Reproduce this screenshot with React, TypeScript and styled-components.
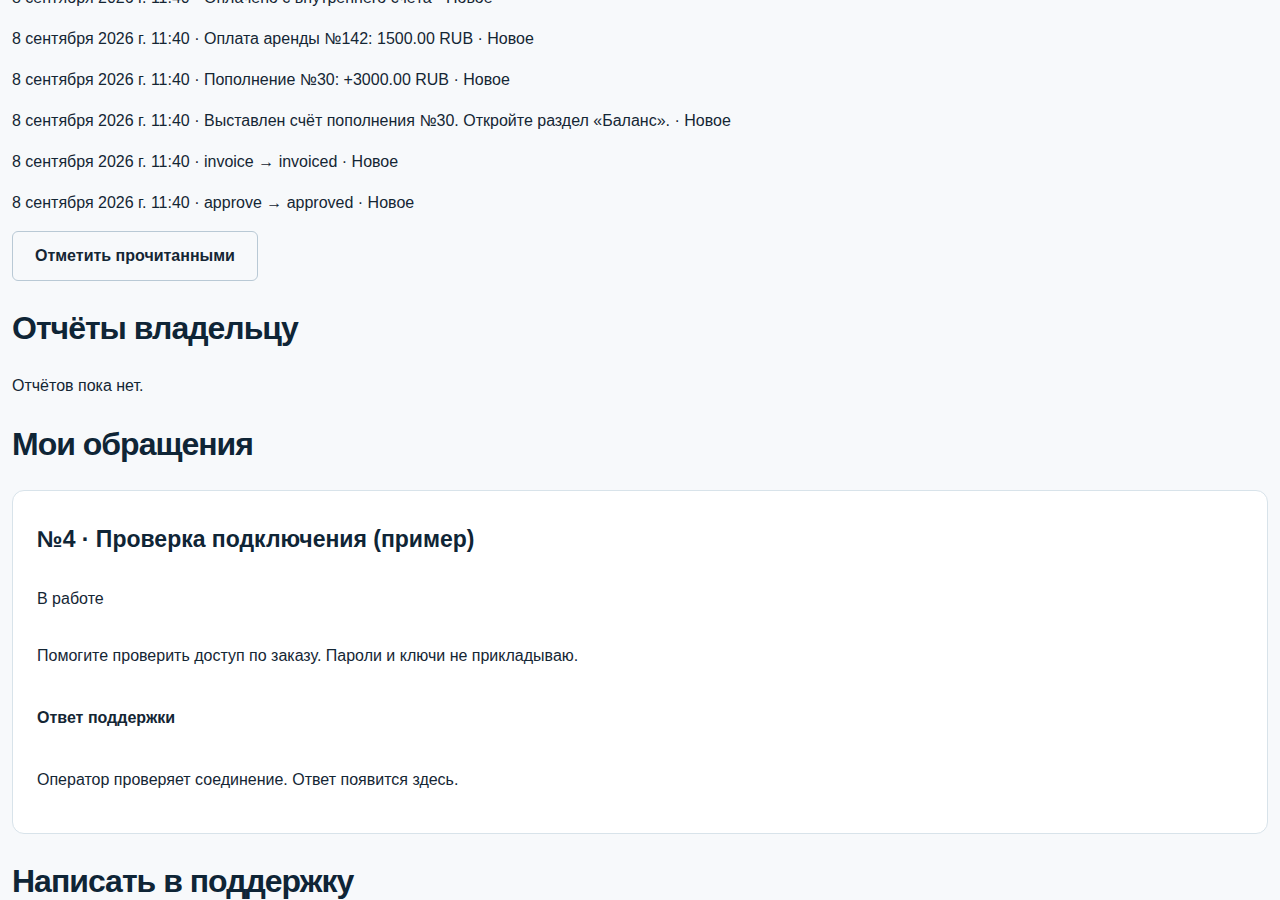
import styled, { createGlobalStyle } from 'styled-components';

interface INotification {
  date: string;
  text: string;
  status: string;
}

const notifications: INotification[] = [
  { date: '8 сентября 2026 г. 11:40', text: 'Оплачено с внутреннего счёта', status: 'Новое' },
  { date: '8 сентября 2026 г. 11:40', text: 'Оплата аренды №142: 1500.00 RUB', status: 'Новое' },
  { date: '8 сентября 2026 г. 11:40', text: 'Пополнение №30: +3000.00 RUB', status: 'Новое' },
  {
    date: '8 сентября 2026 г. 11:40',
    text: 'Выставлен счёт пополнения №30. Откройте раздел «Баланс».',
    status: 'Новое',
  },
  { date: '8 сентября 2026 г. 11:40', text: 'invoice → invoiced', status: 'Новое' },
  { date: '8 сентября 2026 г. 11:40', text: 'approve → approved', status: 'Новое' },
];

const App = () => {
  return (
    <>
      <GlobalStyle />
      <Page>
        <NotificationList>
          {notifications.map((n, i) => (
            <NotificationRow key={i}>
              {n.date} · {n.text} · {n.status}
            </NotificationRow>
          ))}
        </NotificationList>
        <OutlineButton type="button">Отметить прочитанными</OutlineButton>

        <SectionTitle>Отчёты владельцу</SectionTitle>
        <Text>Отчётов пока нет.</Text>

        <SectionTitle>Мои обращения</SectionTitle>
        <TicketCard>
          <TicketTitle>№4 · Проверка подключения (пример)</TicketTitle>
          <TicketLine>В работе</TicketLine>
          <TicketLine>Помогите проверить доступ по заказу. Пароли и ключи не прикладываю.</TicketLine>
          <ReplyLabel>Ответ поддержки</ReplyLabel>
          <TicketLine>Оператор проверяет соединение. Ответ появится здесь.</TicketLine>
        </TicketCard>

        <SectionTitle>Написать в поддержку</SectionTitle>
      </Page>
    </>
  );
};

const GlobalStyle = createGlobalStyle`
  html, body {
    margin: 0;
    padding: 0;
    background: #f7f9fb;
  }
  body {
    font-family: "Liberation Sans", Arial, sans-serif;
    color: #142634;
    font-size: 16px;
    overflow: hidden;
  }
  * {
    box-sizing: border-box;
  }
`;

const Page = styled.main`
  padding: 0 12px 40px;
`;

const NotificationList = styled.div`
  margin-top: -23px;
  display: flex;
  flex-direction: column;
`;

const NotificationRow = styled.div`
  padding: 8px 0;
  line-height: 25px;
`;

const OutlineButton = styled.button`
  margin-top: 8px;
  height: 50px;
  padding: 0 22px;
  border: 1px solid #b9c9d5;
  border-radius: 6px;
  background: #f7f9fb;
  color: #142634;
  font-family: inherit;
  font-size: 16px;
  font-weight: 700;
  cursor: pointer;
`;

const SectionTitle = styled.h2`
  margin: 28px 0 27px;
  font-size: 32px;
  line-height: 38px;
  font-weight: 700;
  letter-spacing: -1px;
  color: #0f2536;
`;

const Text = styled.p`
  margin: 0 0 -1px;
  line-height: 24px;
`;

const TicketCard = styled.section`
  background: #ffffff;
  border: 1px solid #d8e3ea;
  border-radius: 12px;
  padding: 34px 24px 41px;
`;

const TicketTitle = styled.h3`
  margin: 0 0 33px;
  font-size: 23px;
  line-height: 29px;
  font-weight: 700;
  color: #0f2536;
`;

const TicketLine = styled.p`
  margin: 0 0 33px;
  line-height: 24px;
  &:last-child {
    margin-bottom: 0;
  }
`;

const ReplyLabel = styled.p`
  margin: 38px 0 38px;
  line-height: 24px;
  font-weight: 700;
`;

export default App;
